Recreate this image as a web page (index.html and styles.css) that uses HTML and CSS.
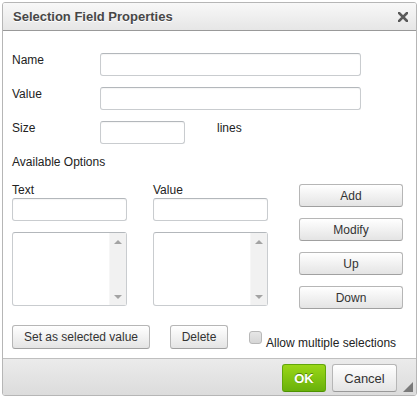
FILE: index.html
```html
<!DOCTYPE html>
<html lang="en">
<head>
  <meta charset="UTF-8">
  <title>Selection Field Properties</title>
  <link rel="stylesheet" href="styles.css">
</head>
<body>

<div class="dialog">
  <div class="dialog-title">
    <span>Selection Field Properties</span>
    <svg class="close" width="10" height="10" viewBox="0 0 10 10">
      <path d="M1 1 L9 9 M9 1 L1 9" stroke="#5a5a5a" stroke-width="2.6" stroke-linecap="square"/>
    </svg>
  </div>

  <div class="dialog-body">
    <div class="fields">
      <label>Name</label>
      <input type="text" class="input-wide">
      <label>Value</label>
      <input type="text" class="input-wide">
      <label>Size</label>
      <div class="size-row">
        <input type="text" class="input-size">
        <span class="lines">lines</span>
      </div>
    </div>

    <div class="section-label">Available Options</div>

    <div class="options">
      <div class="opt-col">
        <label>Text</label>
        <input type="text" class="input-opt">
        <div class="listbox">
          <div class="scrollbar">
            <span class="arrow-up"></span>
            <span class="arrow-down"></span>
          </div>
        </div>
      </div>
      <div class="opt-col">
        <label>Value</label>
        <input type="text" class="input-opt">
        <div class="listbox">
          <div class="scrollbar">
            <span class="arrow-up"></span>
            <span class="arrow-down"></span>
          </div>
        </div>
      </div>
      <div class="opt-buttons">
        <button class="btn">Add</button>
        <button class="btn">Modify</button>
        <button class="btn">Up</button>
        <button class="btn">Down</button>
      </div>
    </div>

    <div class="actions">
      <button class="btn btn-selected">Set as selected value</button>
      <button class="btn btn-delete">Delete</button>
      <span class="checkbox"></span>
      <span class="check-label">Allow multiple selections</span>
    </div>
  </div>

  <div class="dialog-footer">
    <button class="btn-ok">OK</button>
    <button class="btn-cancel">Cancel</button>
    <span class="grip"></span>
  </div>
</div>

</body>
</html>
```

FILE: styles.css
```css
body {
  margin: 0;
  background: #fff;
  font-family: "Liberation Sans", Arial, sans-serif;
  font-size: 12px;
  color: #222;
}

.dialog {
  margin: 2px 0 0 2px;
  width: 413px;
  border: 1px solid #b6b6b6;
  border-radius: 3px;
  background: #fff;
  overflow: hidden;
}

.dialog-title {
  height: 27px;
  display: flex;
  align-items: center;
  justify-content: space-between;
  padding: 0 8px 0 10px;
  background: linear-gradient(#f8f8f8, #e6e6e6);
  border-bottom: 1px solid #999;
  font-size: 13px;
  font-weight: bold;
  color: #474747;
  text-shadow: 0 1px 0 #fff;
}

.close {
  margin-top: 1px;
}

.dialog-body {
  height: 327px;
  box-sizing: border-box;
  padding: 22px 9px 0 9px;
}

.fields {
  display: grid;
  grid-template-columns: 88px 261px;
  row-gap: 11px;
}

.fields label {
  line-height: 14px;
}

input {
  box-sizing: border-box;
  height: 23px;
  margin: 0;
  border: 1px solid #c9cccf;
  border-top-color: #b3b7bb;
  border-radius: 3px;
  box-shadow: inset 0 1px 1px rgba(0, 0, 0, 0.04);
  background: #fff;
}

.input-wide {
  width: 261px;
}

.size-row {
  display: flex;
  align-items: flex-start;
}

.input-size {
  width: 85px;
}

.lines {
  margin-left: 32px;
  line-height: 14px;
}

.section-label {
  margin-top: 11px;
  line-height: 14px;
}

.options {
  margin-top: 14px;
  display: flex;
}

.opt-col {
  width: 115px;
  display: flex;
  flex-direction: column;
  margin-right: 26px;
}

.opt-col + .opt-col {
  margin-right: 31px;
}

.opt-col label {
  line-height: 14px;
  margin-bottom: 1px;
}

.input-opt {
  width: 115px;
}

.listbox {
  margin-top: 11px;
  height: 74px;
  box-sizing: border-box;
  border: 1px solid #c9cccf;
  border-top-color: #b3b7bb;
  border-radius: 3px;
  display: flex;
  justify-content: flex-end;
}

.scrollbar {
  width: 16px;
  background: #f1f1f1;
  border-left: 1px solid #f6f6f6;
  display: flex;
  flex-direction: column;
  justify-content: space-between;
  align-items: center;
  padding: 7px 0 6px;
}

.arrow-up {
  width: 0;
  height: 0;
  border-left: 4px solid transparent;
  border-right: 4px solid transparent;
  border-bottom: 4px solid #a3a3a3;
}

.arrow-down {
  width: 0;
  height: 0;
  border-left: 4px solid transparent;
  border-right: 4px solid transparent;
  border-top: 4px solid #a3a3a3;
}

.opt-buttons {
  margin-top: 1px;
  width: 104px;
  display: flex;
  flex-direction: column;
  gap: 11px;
}

.btn {
  box-sizing: border-box;
  height: 23px;
  padding: 0;
  border: 1px solid #b6b6b6;
  border-bottom-color: #a0a0a0;
  border-radius: 3px;
  background: linear-gradient(#fff, #e4e4e4);
  font-family: "Liberation Sans", Arial, sans-serif;
  font-size: 12px;
  color: #333;
  cursor: pointer;
}

.actions {
  margin-top: 16px;
  display: flex;
  align-items: flex-start;
}

.btn-selected {
  width: 138px;
  height: 24px;
}

.btn-delete {
  width: 58px;
  height: 24px;
  margin-left: 20px;
}

.checkbox {
  box-sizing: border-box;
  width: 13px;
  height: 13px;
  margin: 6px 0 0 21px;
  border: 1px solid #b8b8b8;
  border-radius: 3px;
  background: linear-gradient(#e6e6e6, #d6d6d6);
}

.check-label {
  margin: 11px 0 0 4px;
  line-height: 14px;
}

.dialog-footer {
  height: 37px;
  box-sizing: border-box;
  border-top: 1px solid #bfbfbf;
  background: linear-gradient(#ebebeb, #dcdcdc);
  display: flex;
  justify-content: flex-end;
  align-items: flex-start;
  padding: 5px 19px 0 0;
  position: relative;
}

.btn-ok {
  box-sizing: border-box;
  width: 44px;
  height: 28px;
  border: 1px solid #62a60a;
  border-bottom-color: #4d9200;
  border-radius: 3px;
  background: linear-gradient(#9ad717, #69b10b);
  color: #fff;
  font-family: "Liberation Sans", Arial, sans-serif;
  font-size: 13px;
  font-weight: bold;
  text-shadow: 0 -1px 0 #55830c;
  padding: 0;
}

.btn-cancel {
  box-sizing: border-box;
  width: 65px;
  height: 28px;
  margin-left: 6px;
  border: 1px solid #b6b6b6;
  border-bottom-color: #999;
  border-radius: 3px;
  background: linear-gradient(#fff, #e4e4e4);
  color: #333;
  font-family: "Liberation Sans", Arial, sans-serif;
  font-size: 13px;
  padding: 0;
}

.grip {
  position: absolute;
  right: 3px;
  bottom: 3px;
  width: 0;
  height: 0;
  border-left: 10px solid transparent;
  border-bottom: 10px solid #7a7a7a;
}
```
